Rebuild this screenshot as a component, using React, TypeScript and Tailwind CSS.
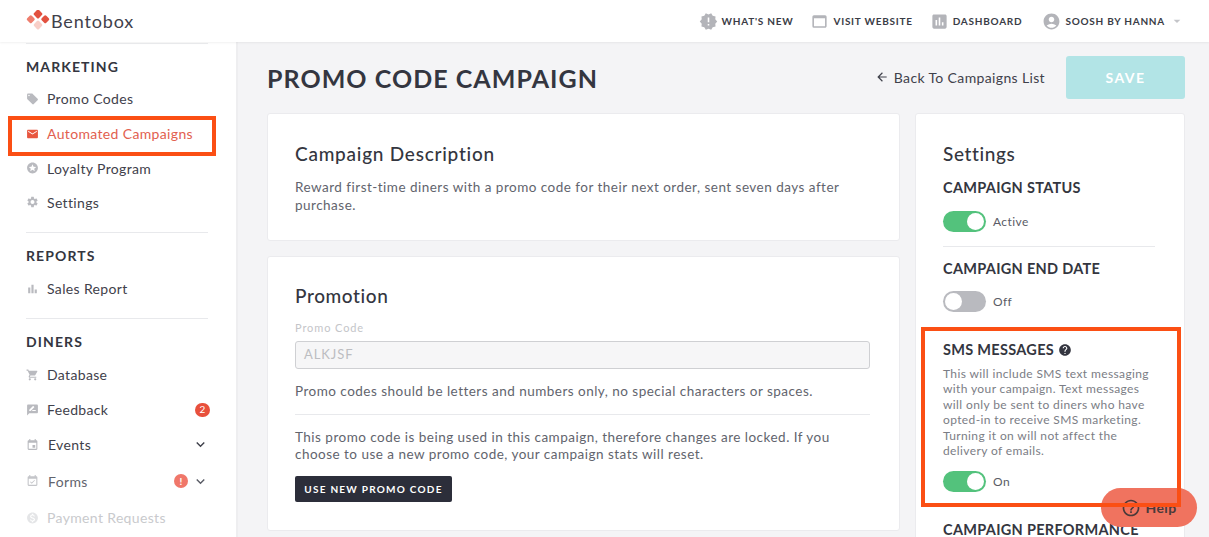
import type { ReactNode } from 'react';
import {
  MdAccountCircle,
  MdArrowBack,
  MdArrowDropDown,
  MdAssessment,
  MdBarChart,
  MdEmail,
  MdEvent,
  MdEventAvailable,
  MdExpandMore,
  MdHelp,
  MdHelpOutline,
  MdLocalOffer,
  MdMonetizationOn,
  MdNewReleases,
  MdRateReview,
  MdSettings,
  MdShoppingCart,
  MdStars,
  MdWebAsset,
} from 'react-icons/md';

const font = { fontFamily: 'Lato, "Liberation Sans", sans-serif' };

const Logo = () => (
  <svg width="24" height="22" viewBox="0 0 24 22">
    <rect x="8.5" y="0.5" width="7" height="7" rx="1.5" transform="rotate(45 12 4)" fill="#e2513f" />
    <rect x="1.5" y="6" width="6.5" height="6.5" rx="1.5" transform="rotate(45 4.75 9.25)" fill="#ee7d6d" />
    <rect x="16" y="6" width="6.5" height="6.5" rx="1.5" transform="rotate(45 19.25 9.25)" fill="#e2513f" />
    <rect x="8.5" y="11.5" width="7" height="7" rx="1.5" transform="rotate(45 12 15)" fill="#f8cfc8" />
  </svg>
);

const TopLink = ({ icon, label }: { icon: ReactNode; label: string }) => (
  <div className="flex items-center gap-[4px]">
    <span className="text-[#b3b4b9] text-[19px]">{icon}</span>
    <span className="text-[10px] font-bold tracking-[0.75px] text-[#3a3c46]">{label}</span>
  </div>
);

const NavItem = ({
  icon,
  label,
  className = 'text-[#3f414b]',
  right,
  gap = 'gap-[8px]',
  height = 'h-[35px]',
}: {
  icon: ReactNode;
  label: string;
  className?: string;
  right?: ReactNode;
  gap?: string;
  height?: string;
}) => (
  <div className={`flex items-center justify-between pr-[26px] ${height}`}>
    <div className={`flex items-center ${gap} ${className}`}>
      <span className="w-[13px] flex justify-center text-[16px]">{icon}</span>
      <span className="text-[14px] tracking-[0.35px]">{label}</span>
    </div>
    {right}
  </div>
);

const SectionTitle = ({ children }: { children: ReactNode }) => (
  <div className="text-[14px] font-bold tracking-[1.1px] text-[#343640] leading-[18px]">{children}</div>
);

const Toggle = ({ on, label }: { on: boolean; label: string }) => (
  <div className="flex items-center gap-[7px]">
    <div
      className={`w-[43px] h-[21px] rounded-full flex items-center px-[2px] ${
        on ? 'bg-[#53c27c] justify-end' : 'bg-[#b9babf] justify-start'
      }`}
    >
      <div className="w-[17px] h-[17px] rounded-full bg-white" />
    </div>
    <span className="text-[12px] tracking-[0.4px] text-[#5a5c66]">{label}</span>
  </div>
);

const SettingTitle = ({ children }: { children: ReactNode }) => (
  <div className="text-[14.5px] font-bold tracking-[0.3px] text-[#343640] leading-[18px] whitespace-nowrap">{children}</div>
);

export default function App() {
  return (
    <div className="relative w-[1209px] h-[537px] overflow-hidden bg-[#f4f4f6] flex flex-col" style={font}>
      {/* Top bar */}
      <header className="h-[42px] shrink-0 bg-white shadow-[0_1px_2px_rgba(0,0,0,0.06)] flex items-center justify-between pl-[26px] pr-[24px] z-10">
        <div className="flex items-center gap-[1px]">
          <Logo />
          <span className="text-[18px] tracking-[0.85px] text-[#3f414b] leading-none">Bentobox</span>
        </div>
        <div className="flex items-center gap-[17px]">
          <TopLink icon={<MdNewReleases />} label="WHAT'S NEW" />
          <TopLink icon={<MdWebAsset />} label="VISIT WEBSITE" />
          <TopLink icon={<MdAssessment />} label="DASHBOARD" />
          <div className="flex items-center gap-[4px] ml-[3px]">
            <TopLink icon={<MdAccountCircle />} label="SOOSH BY HANNA" />
            <MdArrowDropDown className="text-[#c4c5c9] text-[16px]" />
          </div>
        </div>
      </header>

      <div className="flex flex-1 min-h-0">
        {/* Sidebar */}
        <aside className="w-[238px] shrink-0 bg-white border-r-2 border-[#eeeef0] pl-[26px]">
          <div className="w-[182px] border-t border-[#ecedef] mt-px" />
          <div className="mt-[14px]">
            <SectionTitle>MARKETING</SectionTitle>
          </div>
          <div className="mt-[5px]">
            <NavItem icon={<MdLocalOffer className="text-[#b9babf]" />} label="Promo Codes" />
            <NavItem icon={<MdEmail className="text-[#e8563f]" />} label="Automated Campaigns" className="text-[#e2604f]" />
            <NavItem icon={<MdStars className="text-[#b9babf]" />} label="Loyalty Program" height="h-[34px]" />
            <NavItem icon={<MdSettings className="text-[#b9babf]" />} label="Settings" height="h-[34px]" />
          </div>
          <div className="w-[182px] border-t border-[#e8e9ec] mt-[13px]" />
          <div className="mt-[14px]">
            <SectionTitle>REPORTS</SectionTitle>
          </div>
          <div className="mt-[6px]">
            <NavItem icon={<MdBarChart className="text-[#b9babf]" />} label="Sales Report" />
          </div>
          <div className="w-[182px] border-t border-[#e8e9ec] mt-[12px]" />
          <div className="mt-[14px]">
            <SectionTitle>DINERS</SectionTitle>
          </div>
          <div className="mt-[6px]">
            <NavItem icon={<MdShoppingCart className="text-[#b9babf]" />} label="Database" />
            <NavItem
              icon={<MdRateReview className="text-[#b9babf]" />}
              label="Feedback"
              right={
                <span className="w-[15px] h-[14px] rounded-full bg-[#e8503c] text-white text-[10px] flex items-center justify-center">
                  2
                </span>
              }
            />
            <NavItem
              icon={<MdEvent className="text-[#b9babf]" />}
              label="Events"
              gap="gap-[9px]"
              right={<MdExpandMore className="text-[#3f414b] text-[17px] mr-px" />}
            />
            <NavItem
              icon={<MdEventAvailable className="text-[#c4c5c9]" />}
              label="Forms"
              gap="gap-[9px]"
              height="h-[38px]"
              className="text-[#62646d]"
              right={
                <div className="flex items-center gap-[4px] mr-px">
                  <span className="w-[14px] h-[14px] rounded-full bg-[#f0776a] text-white text-[10px] font-bold flex items-center justify-center">
                    !
                  </span>
                  <MdExpandMore className="text-[#5a5c66] text-[17px]" />
                </div>
              }
            />
            <NavItem icon={<MdMonetizationOn className="text-[#e4e5e7]" />} label="Payment Requests" className="text-[#c9cacd]" />
          </div>
        </aside>

        {/* Main */}
        <main className="flex-1 min-w-0 pl-[29px] pr-[24px]">
          <div className="flex items-center justify-between h-[71px] pb-[1px]">
            <h1 className="text-[25px] font-bold tracking-[1.05px] text-[#343640] mt-[4px]">PROMO CODE CAMPAIGN</h1>
            <div className="flex items-center gap-[21px]">
              <div className="flex items-center gap-[5px] text-[#3f414b]">
                <MdArrowBack className="text-[14px]" />
                <span className="text-[14px] tracking-[0.36px]">Back To Campaigns List</span>
              </div>
              <button className="w-[119px] h-[43px] rounded-[3px] bg-[#b2e4e6] text-white font-bold text-[14px] tracking-[1.4px]">
                SAVE
              </button>
            </div>
          </div>

          <div className="flex items-start gap-[15px]">
            <div className="w-[633px] flex flex-col gap-[15px]">
              <section className="h-[128px] bg-white rounded-[3px] border border-[#ebebee] pt-[27px] pl-[27px] pr-[29px]">
                <h2 className="text-[19px] tracking-[0.75px] font-medium text-[#343640] leading-[26px]">Campaign Description</h2>
                <p className="mt-[11px] text-[13.5px] tracking-[0.48px] leading-[18px] text-[#62646d]">
                  Reward first-time diners with a promo code for their next order, sent seven days after purchase.
                </p>
              </section>

              <section className="h-[275px] bg-white rounded-[3px] border border-[#ebebee] pt-[26px] pl-[27px] pr-[29px]">
                <h2 className="text-[19px] tracking-[0.6px] font-medium text-[#343640] leading-[26px]">Promotion</h2>
                <label className="block mt-[12px] text-[11px] tracking-[0.9px] text-[#c4c5c9] leading-[14px]">Promo Code</label>
                <div className="mt-[6px] h-[28px] rounded-[3px] border border-[#cfd0d3] bg-[#f6f6f7] flex items-center pl-[8px] text-[13px] tracking-[0.9px] text-[#bcbdc1]">
                  ALKJSF
                </div>
                <p className="mt-[13px] text-[13.5px] tracking-[0.48px] leading-[18px] text-[#62646d]">
                  Promo codes should be letters and numbers only, no special characters or spaces.
                </p>
                <div className="mt-[14px] border-t border-[#e8e9ec]" />
                <p className="mt-[14px] text-[13.5px] tracking-[0.48px] leading-[17px] text-[#62646d]">
                  This promo code is being used in this campaign, therefore changes are locked. If you choose to use a new promo code, your campaign stats will reset.
                </p>
                <button className="mt-[13px] h-[26px] w-[157px] rounded-[2px] bg-[#2c2e3a] text-white text-[10px] font-bold tracking-[1.25px]">
                  USE NEW PROMO CODE
                </button>
              </section>
            </div>

            <section className="w-[270px] h-[500px] shrink-0 bg-white rounded-[3px] border border-[#ebebee] pt-[27px] pl-[27px] pr-[29px]">
              <h2 className="text-[19px] tracking-[0.6px] font-medium text-[#343640] leading-[26px]">Settings</h2>
              <div className="mt-[12px]">
                <SettingTitle>CAMPAIGN STATUS</SettingTitle>
              </div>
              <div className="mt-[14px]">
                <Toggle on label="Active" />
              </div>
              <div className="mt-[14px] border-t border-[#e8e9ec]" />
              <div className="mt-[13px]">
                <SettingTitle>CAMPAIGN END DATE</SettingTitle>
              </div>
              <div className="mt-[13px]">
                <Toggle on={false} label="Off" />
              </div>
              <div className="mt-[29px] flex items-center gap-[4px]">
                <SettingTitle>SMS MESSAGES</SettingTitle>
                <MdHelp className="text-[#343640] text-[14px]" />
              </div>
              <p className="mt-[7px] text-[12px] tracking-[0.38px] leading-[15.4px] text-[#7b7d85]">
                This will include SMS text messaging with your campaign. Text messages will only be sent to diners who have opted-in to receive SMS marketing. Turning it on will not affect the delivery of emails.
              </p>
              <div className="mt-[13px]">
                <Toggle on label="On" />
              </div>
              <div className="mt-[29px]">
                <SettingTitle>CAMPAIGN PERFORMANCE</SettingTitle>
              </div>
            </section>
          </div>
        </main>
      </div>

      {/* Help pill, then the annotation boxes drawn over the page */}
      <div className="absolute left-[1101px] top-[488px] w-[96px] h-[39px] rounded-full bg-[#f0735f] flex items-center justify-center gap-[4px] text-[#4a3a3a]">
        <MdHelpOutline className="text-[20px]" />
        <span className="text-[14px] font-bold tracking-[0.4px]">Help</span>
      </div>
      <div className="absolute left-[8px] top-[116px] w-[208px] h-[40px] border-[4px] border-[#fb4f14]" />
      <div className="absolute left-[921px] top-[327px] w-[260px] h-[180px] border-[4px] border-[#fb4f14]" />
    </div>
  );
}
